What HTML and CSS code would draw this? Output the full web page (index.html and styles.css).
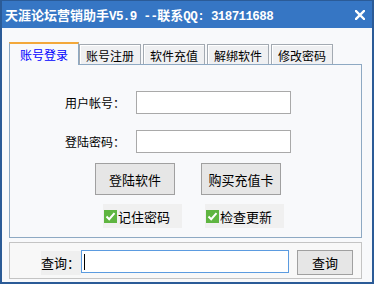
FILE: index.html
```html
<!DOCTYPE html>
<html lang="zh-CN">
<head>
<meta charset="utf-8">
<link rel="stylesheet" href="styles.css">
</head>
<body>
<div class="win">
  <div class="titlebar">
    <span class="title">天涯论坛营销助手<span class="mono">V5.9 --</span>联系<span class="mono">QQ: 318711688</span></span>
    <svg class="close" width="10" height="10" viewBox="0 0 10 10"><path d="M1 1L9 9M9 1L1 9" stroke="#fff" stroke-width="2.4" stroke-linecap="square"/></svg>
  </div>
  <div class="content">
    <div class="tabs">
      <div class="tab active">账号登录</div>
      <div class="tab">账号注册</div>
      <div class="tab">软件充值</div>
      <div class="tab">解绑软件</div>
      <div class="tab">修改密码</div>
    </div>
    <div class="panel">
      <div class="row"><span class="lbl">用户帐号：</span><div class="field"></div></div>
      <div class="row"><span class="lbl">登陆密码：</span><div class="field"></div></div>
      <div class="btns">
        <div class="btn">登陆软件</div>
        <div class="btn">购买充值卡</div>
      </div>
      <div class="checks">
        <div class="chk"><svg class="box" width="13" height="13" viewBox="0 0 13 13"><rect width="13" height="13" fill="#5fb541"/><path d="M2.5 6.5L5.2 9.2L10.5 3.2" fill="none" stroke="#fff" stroke-width="2"/></svg>记住密码</div>
        <div class="chk"><svg class="box" width="13" height="13" viewBox="0 0 13 13"><rect width="13" height="13" fill="#5fb541"/><path d="M2.5 6.5L5.2 9.2L10.5 3.2" fill="none" stroke="#fff" stroke-width="2"/></svg>检查更新</div>
      </div>
    </div>
    <div class="search">
      <span class="slbl">查询：</span>
      <div class="sfield"><span class="caret"></span></div>
      <div class="sbtn">查询</div>
    </div>
  </div>
</div>
</body>
</html>
```
FILE: styles.css
```css
html, body {
  margin: 0;
  padding: 0;
}
body {
  width: 374px;
  height: 284px;
  font-family: "Noto Sans CJK SC", "Noto Sans", sans-serif;
  color: #000;
}
.win {
  box-sizing: border-box;
  width: 374px;
  height: 284px;
  border: 2px solid #2b5b97;
  border-top: 1px solid #2b5b97;
  background: #f8f9fb;
  display: flex;
  flex-direction: column;
}
.titlebar {
  height: 27px;
  flex: none;
  background: #3676c4;
  display: flex;
  align-items: center;
  justify-content: space-between;
  padding: 0 7px 0 3px;
  color: #fff;
  font-weight: bold;
  font-size: 13px;
}
.title {
  white-space: pre;
}
.mono {
  font-family: "Liberation Mono", "DejaVu Sans Mono", monospace;
  font-size: 12.5px;
  letter-spacing: -0.6px;
}
.close {
  display: block;
}
.content {
  padding: 14px 0 0 7px;
}
.tabs {
  display: flex;
  align-items: flex-end;
  height: 22px;
}
.tab {
  box-sizing: border-box;
  height: 20px;
  width: 62px;
  margin-left: 2px;
  border: 1px solid #a3aab2;
  border-bottom: none;
  background: #eff0f2;
  box-shadow: inset 1px 1px #fff;
  font-size: 12px;
  text-align: center;
  line-height: 18px;
  padding-top: 2px;
}
.tab.active {
  height: 23px;
  width: 70px;
  margin-left: 0;
  margin-bottom: -1px;
  border-color: #8ea9c3;
  border-top: 2px solid #f3a83a;
  background: #f8f9fb;
  box-shadow: none;
  color: #0000ff;
  position: relative;
  z-index: 1;
  line-height: 19px;
  padding-top: 1px;
}
.tab.active + .tab {
  margin-left: 0;
}
.panel {
  box-sizing: border-box;
  width: 353px;
  height: 174px;
  border: 1px solid #8ea9c3;
  background: #f8f9fb;
  padding-top: 26px;
}
.row {
  display: flex;
  align-items: center;
  height: 23px;
  margin-left: 55px;
}
.row + .row {
  margin-top: 16px;
}
.lbl {
  width: 71px;
  font-size: 12px;
}
.field {
  box-sizing: border-box;
  width: 155px;
  height: 23px;
  border: 1px solid #a9a9a9;
  background: #fff;
}
.btns {
  display: flex;
  gap: 26px;
  margin: 10px 0 0 85px;
}
.btn {
  box-sizing: border-box;
  width: 80px;
  height: 32px;
  border: 1px solid #a0a0a0;
  background: #e6e6e6;
  font-size: 13px;
  display: flex;
  align-items: center;
  justify-content: center;
}
.checks {
  display: flex;
  gap: 23px;
  margin: 9px 0 0 93px;
}
.chk {
  box-sizing: border-box;
  width: 79px;
  height: 24px;
  background: #f0f0f0;
  display: flex;
  align-items: center;
  padding-left: 1px;
  font-size: 13px;
}
.box {
  display: block;
  margin-right: 1px;
  flex: none;
}
.search {
  box-sizing: border-box;
  width: 353px;
  height: 37px;
  margin-top: 4px;
  border: 1px solid #c4c4c4;
  background: #f8f8f8;
  display: flex;
  align-items: flex-start;
  padding: 7px 0 0 31px;
}
.slbl {
  width: 40px;
  height: 24px;
  margin-top: 1px;
  background: #efefef;
  font-size: 13px;
  line-height: 24px;
}
.sfield {
  box-sizing: border-box;
  width: 208px;
  height: 23px;
  border: 1px solid #5b9be0;
  background: #fff;
  padding: 3px 0 0 2px;
}
.caret {
  display: block;
  width: 1px;
  height: 16px;
  background: #000;
}
.sbtn {
  box-sizing: border-box;
  width: 56px;
  height: 25px;
  margin-left: 8px;
  border: 1px solid #a0a0a0;
  background: #e6e6e6;
  font-size: 13px;
  display: flex;
  align-items: center;
  justify-content: center;
}
```
